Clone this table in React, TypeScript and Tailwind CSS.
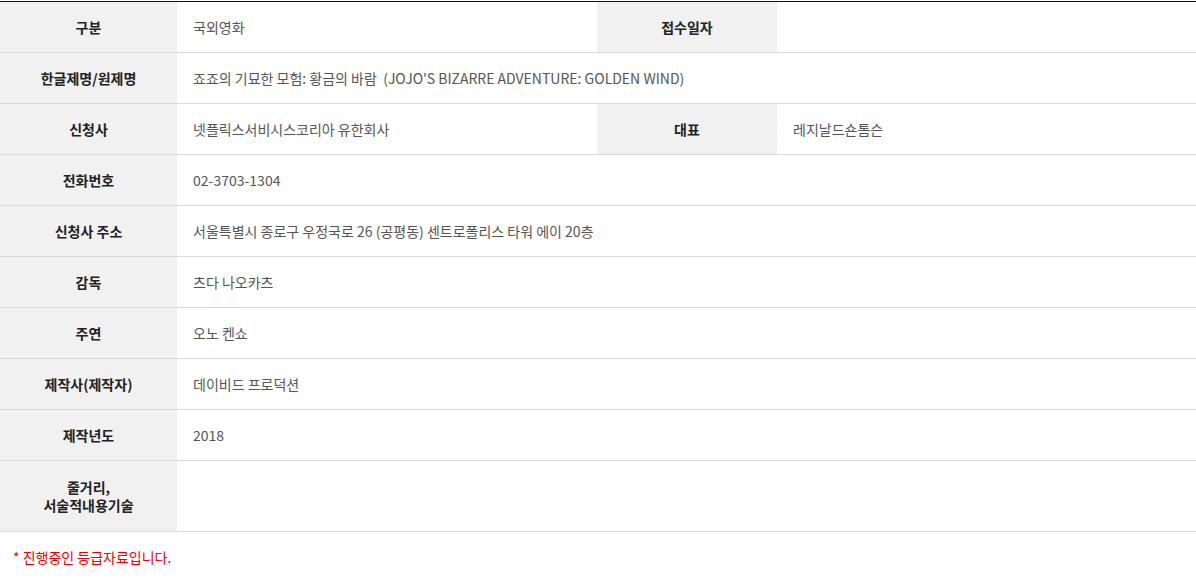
const rows: { label: React.ReactNode; value: string; label2?: string; value2?: string; tall?: boolean }[] = [
  { label: '구분', value: '국외영화', label2: '접수일자', value2: '' },
  { label: '한글제명/원제명', value: '죠죠의 기묘한 모험: 황금의 바람  (JOJO\'S BIZARRE ADVENTURE: GOLDEN WIND)' },
  { label: '신청사', value: '넷플릭스서비시스코리아 유한회사', label2: '대표', value2: '레지날드숀톰슨' },
  { label: '전화번호', value: '02-3703-1304' },
  { label: '신청사 주소', value: '서울특별시 종로구 우정국로 26 (공평동) 센트로폴리스 타워 에이 20층' },
  { label: '감독', value: '츠다 나오카츠' },
  { label: '주연', value: '오노 켄쇼' },
  { label: '제작사(제작자)', value: '데이비드 프로덕션' },
  { label: '제작년도', value: '2018' },
  {
    label: (
      <>
        줄거리,
        <br />
        서술적내용기술
      </>
    ),
    value: '',
    tall: true,
  },
];

export default function App() {
  return (
    <div
      className="w-[1196px] h-[579px] bg-white pt-px"
      style={{ fontFamily: '"Noto Sans CJK KR", "Noto Sans", sans-serif' }}
    >
      <div className="border-t border-[#111]">
        {rows.map((r, i) => (
          <div
            key={i}
            className={`flex border-b border-[#d9d9d9] text-[14px] ${r.tall ? 'h-[71px]' : 'h-[51px]'}`}
          >
            <div className="w-[177px] shrink-0 bg-[#f1f1f1] flex items-center justify-center text-center font-bold text-[#222] leading-[18px]">
              {r.label}
            </div>
            {r.label2 !== undefined ? (
              <>
                <div className="w-[420px] shrink-0 flex items-center pl-4 text-[#555]">{r.value}</div>
                <div className="w-[180px] shrink-0 bg-[#f1f1f1] flex items-center justify-center font-bold text-[#222]">
                  {r.label2}
                </div>
                <div className="flex-1 flex items-center pl-4 text-[#555]">{r.value2}</div>
              </>
            ) : (
              <div className="flex-1 flex items-center pl-4 text-[#555] whitespace-pre">{r.value}</div>
            )}
          </div>
        ))}
      </div>
      <p className="pl-[13px] pt-[15px] text-[14px] text-[#f00000]">* 진행중인 등급자료입니다.</p>
    </div>
  );
}
